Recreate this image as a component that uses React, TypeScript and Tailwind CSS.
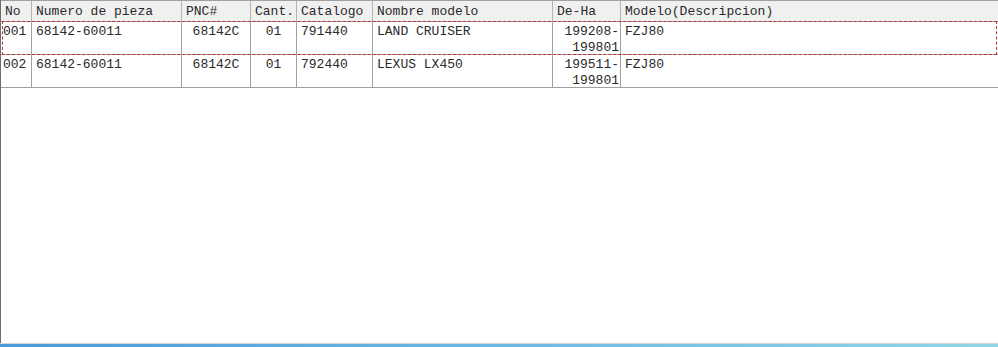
const columns = [
  { key: 'no', label: 'No', width: 'w-[31px]' },
  { key: 'part', label: 'Numero de pieza', width: 'w-[150px]' },
  { key: 'pnc', label: 'PNC#', width: 'w-[69px]' },
  { key: 'qty', label: 'Cant.', width: 'w-[46px]' },
  { key: 'catalog', label: 'Catalogo', width: 'w-[76px]' },
  { key: 'model', label: 'Nombre modelo', width: 'w-[180px]' },
  { key: 'range', label: 'De-Ha', width: 'w-[68px]' },
  { key: 'desc', label: 'Modelo(Descripcion)', width: 'flex-1' },
];

const rows = [
  { no: '001', part: '68142-60011', pnc: '68142C', qty: '01', catalog: '791440', model: 'LAND CRUISER', range: ['199208-', '199801'], desc: 'FZJ80' },
  { no: '002', part: '68142-60011', pnc: '68142C', qty: '01', catalog: '792440', model: 'LEXUS LX450', range: ['199511-', '199801'], desc: 'FZJ80' },
];

export default function App() {
  return (
    <div className="w-[998px] h-[347px] bg-white flex flex-col font-mono text-[13px] leading-4 text-[#2a2a2a] overflow-hidden">
      <div className="flex-1 flex flex-col border-l border-[#6d6d6d]">
        {/* Header */}
        <div className="flex h-[22px] bg-[#f0f0f0] border-t border-[#a0a0a0] border-b border-b-[#a0a0a0]">
          {columns.map((col, i) => (
            <div
              key={col.key}
              className={`${col.width} shrink-0 pl-[4px] pt-[3px] whitespace-nowrap ${
                i < columns.length - 1 ? 'border-r border-[#b4b4b4]' : ''
              }`}
            >
              {col.label}
            </div>
          ))}
        </div>

        {/* Rows */}
        {rows.map((row, r) => (
          <div key={row.no} className="relative flex h-[33px] border-b border-[#a0a0a0]">
            {r === 0 && (
              <div className="absolute left-[1px] right-[1px] -top-px bottom-[-1px] border border-dashed border-[#b8343a] pointer-events-none" />
            )}
            <div className="w-[31px] shrink-0 pl-[2px] pt-[2px] border-r border-[#a0a0a0]">{row.no}</div>
            <div className="w-[150px] shrink-0 pl-[4px] pt-[2px] border-r border-[#a0a0a0]">{row.part}</div>
            <div className="w-[69px] shrink-0 pt-[2px] text-center border-r border-[#a0a0a0]">{row.pnc}</div>
            <div className="w-[46px] shrink-0 pt-[2px] text-center border-r border-[#a0a0a0]">{row.qty}</div>
            <div className="w-[76px] shrink-0 pl-[4px] pt-[2px] border-r border-[#a0a0a0]">{row.catalog}</div>
            <div className="w-[180px] shrink-0 pl-[4px] pt-[2px] border-r border-[#a0a0a0]">{row.model}</div>
            <div className="w-[68px] shrink-0 pr-[1px] pt-[2px] text-right border-r border-[#a0a0a0]">
              <div>{row.range[0]}</div>
              <div>{row.range[1]}</div>
            </div>
            <div className="flex-1 pl-[4px] pt-[2px]">{row.desc}</div>
          </div>
        ))}
      </div>
      {/* Bottom edge */}
      <div className="h-px bg-[#d6d6d6]" />
      <div className="h-[3px] bg-gradient-to-r from-[#4a9ad8] via-[#6cb8e4] to-[#8fd6e6]" />
    </div>
  );
}
